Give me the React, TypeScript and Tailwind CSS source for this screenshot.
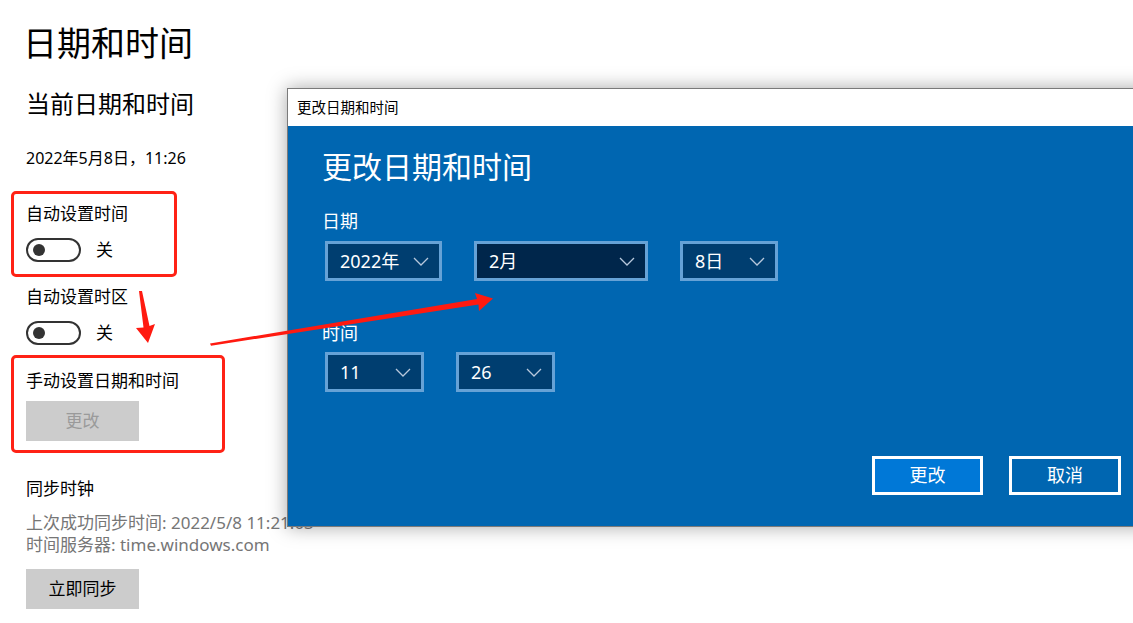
import React from "react";

const FONT = { fontFamily: '"Noto Sans", "Noto Sans CJK SC", sans-serif' };

function Toggle() {
  return (
    <div className="flex items-center">
      <div className="w-[55px] h-[24px] rounded-full border-2 border-[#333] flex items-center pl-[5px] box-border">
        <div className="w-[12px] h-[12px] rounded-full bg-[#333]" />
      </div>
      <span className="ml-[15px] text-[17px] leading-[24px] text-black">关</span>
    </div>
  );
}

function Chevron() {
  return (
    <svg width="16" height="9" viewBox="0 0 16 9" className="shrink-0">
      <path d="M1 1 L8 8 L15 1" fill="none" stroke="#b8c8dc" strokeWidth="1.3" />
    </svg>
  );
}

function Combo({ label, w, dark }: { label: string; w: string; dark?: boolean }) {
  return (
    <div
      className={`${w} h-[40px] border-[3px] border-[#66a2d6] ${dark ? "bg-[#00264b]" : "bg-[#003e70]"} flex items-center justify-between pl-[12px] pr-[10px] box-border`}
    >
      <span className="text-white text-[18px] leading-[24px]">{label}</span>
      <Chevron />
    </div>
  );
}

export default function App() {
  return (
    <div className="relative w-[1133px] h-[623px] overflow-hidden bg-white text-black" style={FONT}>
      {/* Left settings page */}
      <div className="flex flex-col items-start pl-[26px]">
        <div className="ml-[-3px] mt-[22px] text-[34px] leading-[42px]">日期和时间</div>
        <div className="mt-[24px] text-[24px] leading-[32px]">当前日期和时间</div>
        <div className="mt-[27px] text-[16px] leading-[22px]">2022年5月8日，11:26</div>
        <div className="mt-[33px] text-[17px] leading-[24px]">自动设置时间</div>
        <div className="mt-[12px]">
          <Toggle />
        </div>
        <div className="mt-[23px] text-[17px] leading-[24px]">自动设置时区</div>
        <div className="mt-[12px]">
          <Toggle />
        </div>
        <div className="mt-[24px] text-[17px] leading-[24px]">手动设置日期和时间</div>
        <div className="mt-[8px] w-[113px] h-[40px] bg-[#cccccc] text-[#9a9a9a] text-[17px] flex items-center justify-center">
          更改
        </div>
        <div className="mt-[36px] text-[17px] leading-[24px]">同步时钟</div>
        <div className="mt-[11px] text-[17px] leading-[22px] text-[#767676] whitespace-nowrap">
          上次成功同步时间: 2022/5/8 11:21:03
        </div>
        <div className="text-[17px] leading-[22px] text-[#767676]">时间服务器: time.windows.com</div>
        <div className="mt-[13px] w-[113px] h-[40px] bg-[#cccccc] text-black text-[17px] flex items-center justify-center">
          立即同步
        </div>
      </div>

      {/* Red annotation boxes */}
      <div className="absolute left-[11px] top-[191px] w-[166px] h-[86px] border-[3px] border-[#ff2215] rounded-[5px]" />
      <div className="absolute left-[11px] top-[355px] w-[214px] h-[98px] border-[3px] border-[#ff2215] rounded-[5px]" />

      {/* Dialog window */}
      <div className="absolute left-[287px] top-[88px] w-[880px] h-[439px] border border-[#7a7a7a] shadow-[0_0_18px_rgba(0,0,0,0.35)] flex flex-col">
        <div className="h-[37px] bg-white flex items-center pl-[9px] text-[14.5px] text-black">更改日期和时间</div>
        <div className="flex-1 bg-[#0066b1] flex flex-col pl-[34px] text-white">
          <div className="mt-[21px] text-[30px] leading-[40px]">更改日期和时间</div>
          <div className="mt-[22px] text-[18px] leading-[24px]">日期</div>
          <div className="mt-[8px] ml-[3px] flex gap-[32px]">
            <Combo label="2022年" w="w-[117px]" />
            <Combo label="2月" w="w-[174px]" dark />
            <Combo label="8日" w="w-[98px]" />
          </div>
          <div className="mt-[40px] text-[18px] leading-[24px]">时间</div>
          <div className="mt-[7px] ml-[3px] flex gap-[32px]">
            <Combo label="11" w="w-[99px]" />
            <Combo label="26" w="w-[99px]" />
          </div>
          <div className="mt-[64px] flex gap-[26px] pl-[550px]">
            <div className="w-[111px] h-[39px] border-[3px] border-white bg-[#0078d7] flex items-center justify-center text-[18px]">
              更改
            </div>
            <div className="w-[112px] h-[39px] border-[3px] border-white flex items-center justify-center text-[18px]">
              取消
            </div>
          </div>
        </div>
      </div>

      {/* Red arrows */}
      <svg className="absolute inset-0 pointer-events-none" width="1133" height="623">
        <polygon
          points="139,291 142,291 149.5,326 155,324 148,343 136,328 143.5,327.5"
          fill="#ff1a10"
        />
        <polygon
          points="210,343.5 477,299 475,293 493,298.5 479,311 478.5,304.5 211,345.8"
          fill="#ff1a10"
        />
      </svg>
    </div>
  );
}
